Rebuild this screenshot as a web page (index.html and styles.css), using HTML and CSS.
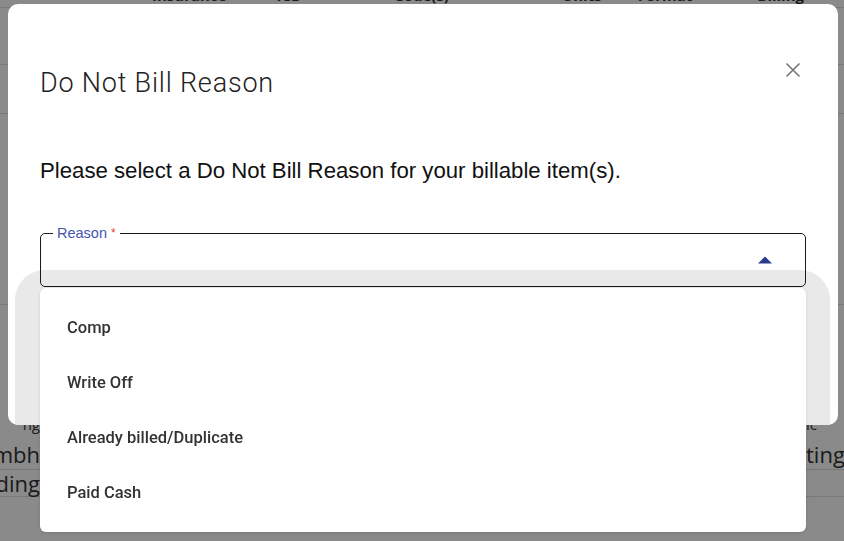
FILE: index.html
```html
<!doctype html>
<html>
  <head>
    <title>Do Not Bill Reason</title>
    <link rel="stylesheet" href="styles.css">
  </head>
  <body>
    <div class="page">
      <div class="grid-head">
        <span class="col-ins">Insurance</span>
        <span class="col-icd">ICD</span>
        <span class="col-code">Code(s)</span>
        <span class="col-units">Units</span>
        <span class="col-format">Format</span>
        <span class="col-billing">Billing</span>
      </div>
      <div class="grid-row row-a">
        <span class="cell-left link">Tr</span>
        <span class="cell-right">n</span>
      </div>
      <div class="grid-row row-b">
        <span class="cell-left small">#</span>
      </div>
      <div class="grid-row row-c">
        <span class="cell-left">7</span>
      </div>
      <div class="grid-row row-d">
        <span class="cell-left small">ng</span>
        <span class="cell-right small">ic</span>
      </div>
      <div class="grid-row row-e">
        <span class="cell-left">mbh</span>
        <span class="cell-right">ting</span>
      </div>
      <div class="grid-row row-f">
        <span class="cell-left">ding</span>
      </div>
    </div>

    <div class="backdrop"></div>

    <div class="dialog" role="dialog">
      <div class="ghost"></div>
      <div class="dialog-head">
        <h2 class="dialog-title">Do Not Bill Reason</h2>
        <button class="close-btn" aria-label="close">
          <svg width="16" height="16" viewBox="0 0 16 16">
            <path d="M1.5 1.5 L14.5 14.5 M14.5 1.5 L1.5 14.5" stroke="#757575" stroke-width="1.6" fill="none"/>
          </svg>
        </button>
      </div>
      <p class="dialog-text">Please select a Do Not Bill Reason for your billable item(s).</p>
      <div class="select-field">
        <label class="select-label">Reason <span class="req">*</span></label>
        <svg class="select-arrow" width="14" height="8" viewBox="0 0 14 8">
          <path d="M0 7.5 L7 0.5 L14 7.5 Z" fill="#2c3a8c"/>
        </svg>
      </div>
    </div>

    <ul class="menu">
      <li class="menu-item">Comp</li>
      <li class="menu-item">Write Off</li>
      <li class="menu-item">Already billed/Duplicate</li>
      <li class="menu-item">Paid Cash</li>
    </ul>
  </body>
</html>
```

FILE: styles.css
```css
html, body {
  margin: 0;
  height: 100%;
  overflow: hidden;
}
body {
  background: #fff;
  font-family: "Open Sans", "Liberation Sans", sans-serif;
  color: #333;
}

/* page behind the dialog */
.page {
  width: 844px;
}
.grid-head {
  display: flex;
  height: 21px;
  margin-top: -14px;
  font-weight: 700;
  font-size: 15px;
  line-height: 18px;
  border-bottom: 1px solid #ddd;
}
.grid-head span {
  display: block;
}
.col-ins { margin-left: 152px; }
.col-icd { margin-left: 50px; }
.col-code { margin-left: 92px; }
.col-units { margin-left: 113px; }
.col-format { margin-left: 36px; }
.col-billing { margin-left: 65px; }

.grid-row {
  display: flex;
  justify-content: space-between;
  align-items: center;
  font-size: 22px;
  border-bottom: 1px solid #ddd;
}
.cell-left {
  display: flex;
  justify-content: flex-end;
  width: 40px;
  overflow: hidden;
  white-space: nowrap;
}
.cell-right {
  display: flex;
  width: 38px;
  overflow: hidden;
  white-space: nowrap;
}
.small { font-size: 15px; }
.link { color: #b0530a; }
.row-a { height: 48px; margin-top: 56px; border-top: 1px solid #ddd; }
.row-b { height: 32px; margin-top: 124px; border-bottom: none; }
.row-c { height: 34px; }
.row-d { height: 28px; margin-top: 105px; border-bottom: none; }
.row-e { height: 31px; }
.row-f { height: 26px; }

.backdrop {
  position: fixed;
  inset: 0;
  background: rgba(0, 0, 0, 0.46);
}

/* dialog */
.dialog {
  position: absolute;
  top: 4px;
  left: 8px;
  width: 830px;
  height: 421px;
  box-sizing: border-box;
  padding: 54px 32px 0;
  background: #fff;
  border-radius: 10px;
  overflow: hidden;
}
.ghost {
  position: absolute;
  top: 266px;
  left: 7px;
  width: 815px;
  height: 260px;
  border-radius: 30px;
  background: #e9e9e9;
}
.dialog-head {
  display: flex;
  justify-content: space-between;
  align-items: flex-start;
}
.dialog-title {
  margin: 9px 0 0;
  font-family: Roboto, "Liberation Sans", sans-serif;
  font-weight: 300;
  font-size: 27px;
  letter-spacing: 0.8px;
  line-height: 32px;
  color: #222;
}
.close-btn {
  display: flex;
  align-items: center;
  justify-content: center;
  width: 24px;
  height: 24px;
  margin-right: 1px;
  padding: 0;
  border: none;
  background: none;
}
.dialog-text {
  margin: 59px 0 0;
  font-family: "Liberation Sans", Arial, sans-serif;
  font-size: 22.2px;
  line-height: 26px;
  color: #111;
}
.select-field {
  position: relative;
  z-index: 1;
  display: flex;
  justify-content: flex-end;
  align-items: center;
  height: 54px;
  margin-top: 49px;
  box-sizing: border-box;
  padding-right: 33px;
  border: 1px solid #1a1a1a;
  border-radius: 5px;
}
.select-label {
  position: absolute;
  top: -9px;
  left: 12px;
  padding: 0 4px;
  background: #fff;
  font-family: "Liberation Sans", Arial, sans-serif;
  font-size: 14.5px;
  line-height: 16px;
  color: #4355b0;
}
.req {
  color: #e0453a;
  font-size: 12px;
  vertical-align: top;
}
.select-arrow {
  display: block;
}

/* dropdown popover */
.menu {
  position: absolute;
  top: 288px;
  left: 40px;
  width: 766px;
  margin: 0;
  padding: 12px 0;
  list-style: none;
  background: #fff;
  border-radius: 6px;
  box-shadow: 0 1px 3px rgba(0, 0, 0, 0.12);
}
.menu-item {
  display: flex;
  align-items: center;
  height: 55px;
  padding-left: 27px;
  font-family: Roboto, "Liberation Sans", sans-serif;
  font-weight: 500;
  font-size: 16.5px;
  color: #333;
}
```
